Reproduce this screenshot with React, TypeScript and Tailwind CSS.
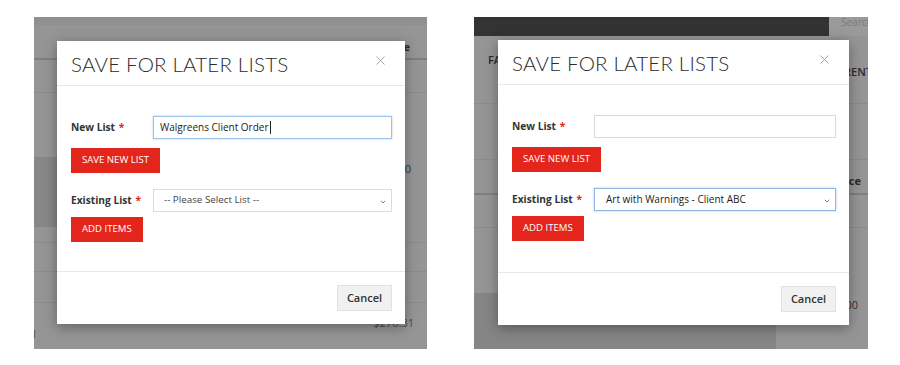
import React from "react";

const sans = "font-['Open_Sans','Liberation_Sans',sans-serif]";

function Chevron() {
  return (
    <svg width="6" height="4" viewBox="0 0 6 4" className="absolute right-[5px] top-[10px]">
      <path d="M0.8 0.8 L3 3 L5.2 0.8" fill="none" stroke="#777" strokeWidth="0.9" />
    </svg>
  );
}

function Modal({
  inputValue,
  inputFocus,
  selectValue,
  selectFocus,
  className,
}: {
  inputValue: string;
  inputFocus: boolean;
  selectValue: string;
  selectFocus: boolean;
  className: string;
}) {
  return (
    <div className={`absolute bg-white shadow-[0_3px_12px_rgba(0,0,0,0.35)] flex flex-col ${className}`}>
      <div className="h-[45px] border-b border-[#e8e8e8] flex items-start justify-between pl-[14px] pr-[20px] shrink-0">
        <div className="font-['Lato',sans-serif] font-light text-[20.5px] leading-none text-[#2b2b2b] mt-[13px] tracking-[0.2px]">
          SAVE FOR LATER LISTS
        </div>
        <svg width="9" height="9" viewBox="0 0 9 9" className="mt-[15px]">
          <path d="M0.5 0.5 L8.5 8.5 M8.5 0.5 L0.5 8.5" stroke="#9a9a9a" strokeWidth="0.9" />
        </svg>
      </div>
      <div className={`flex-1 pl-[14px] pr-[13px] pt-[30px] ${sans}`}>
        <div className="flex items-center">
          <div className="w-[82px] text-[10.2px] font-bold text-[#333]">
            New List <span className="text-[#e3251b] ml-[1px]">*</span>
          </div>
          <div
            className={`flex-1 h-[23px] border ${inputFocus ? "border-[#9cc3ea] shadow-[0_0_2px_rgba(102,155,220,0.5)]" : "border-[#d9d9d9]"} flex items-center pl-[6px] text-[10px] text-[#222]`}
          >
            {inputValue}
            {inputFocus && <span className="inline-block w-px h-[13px] bg-[#222] ml-px" />}
          </div>
        </div>
        <div className="mt-[9px] inline-flex h-[25px] items-center px-[11px] bg-[#e3251b] text-white text-[9.6px] uppercase">
          Save New List
        </div>
        <div className="flex items-center mt-[16px]">
          <div className="w-[82px] text-[10.2px] font-bold text-[#333]">
            Existing List <span className="text-[#e3251b] ml-[1px]">*</span>
          </div>
          <div
            className={`relative flex-1 h-[23px] border ${selectFocus ? "border-[#8fb7e0] shadow-[0_0_2px_rgba(102,155,220,0.6)]" : "border-[#dcdcdc]"} flex items-center ${selectFocus ? "pl-[11px] text-[10px] text-[#222]" : "pl-[10px] text-[9.8px] text-[#444]"}`}
          >
            {selectValue}
            <Chevron />
          </div>
        </div>
        <div className="mt-[5px] inline-flex h-[25px] items-center px-[11px] bg-[#e3251b] text-white text-[9.6px] uppercase">
          Add Items
        </div>
      </div>
      <div className={`h-[53px] border-t border-[#e8e8e8] flex items-start justify-end pr-[13px] pt-[13px] shrink-0 ${sans}`}>
        <div className="h-[26px] w-[55px] flex items-center justify-center bg-[#f1f1f1] border border-[#e2e2e2] text-[11px] font-semibold text-[#333]">
          Cancel
        </div>
      </div>
    </div>
  );
}

function LeftPanel() {
  return (
    <div className={`relative w-[393px] h-[332px] bg-[#959595] overflow-hidden flex flex-col ${sans}`}>
      <div className="h-[8px] bg-[#909090] shrink-0" />
      <div className="h-[35px] border-b-2 border-[#7f7f7f] flex items-start justify-end pr-[17px] pt-[14px] text-[11px] font-bold text-[#2a2a2a] shrink-0">
        Price
      </div>
      <div className="h-[33px] border-b border-[#8b8b8b] shrink-0" />
      <div className="h-[64px] shrink-0" />
      <div className="h-[70px] flex shrink-0">
        <div className="w-[340px] bg-[#878787]" />
        <div className="flex-1 flex justify-end pr-[16px] pt-[4px] text-[11px] text-[#333]">$0.00</div>
      </div>
      <div className="h-[16px] border-b border-[#8b8b8b] shrink-0" />
      <div className="h-[29px] border-b border-[#8b8b8b] shrink-0" />
      <div className="h-[31px] border-b border-[#8b8b8b] shrink-0" />
      <div className="flex-1 flex justify-between pr-[13px] text-[11px] text-[#4a4a4a]">
        <span className="-ml-[3px] mt-[23px]">1</span>
        <span className="mt-[12px]">$270.31</span>
      </div>
      <Modal
        className="left-[23px] top-[24px] w-[348px] h-[283px]"
        inputValue="Walgreens Client Order"
        inputFocus={true}
        selectValue="-- Please Select List --"
        selectFocus={false}
      />
    </div>
  );
}

function RightPanel() {
  return (
    <div className={`relative w-[394px] h-[332px] bg-[#959595] overflow-hidden flex flex-col ${sans}`}>
      <div className="h-[19px] bg-[#333333] flex justify-end shrink-0">
        <div className="w-[39px] bg-[#9a9a9a] text-[10px] text-[#7a7a7a] pl-[12px] leading-none overflow-hidden whitespace-nowrap">
          Search
        </div>
      </div>
      <div className="h-[68px] border-b border-[#8b8b8b] flex justify-between text-[11px] font-semibold text-[#2a2a2a] shrink-0">
        <span className="ml-[14px] mt-[16px]">FAV</span>
        <span className="mt-[28px] -mr-[4px]">CURRENT</span>
      </div>
      <div className="h-[56px] border-b border-[#8b8b8b] shrink-0" />
      <div className="h-[35px] border-b-2 border-[#7f7f7f] flex justify-end items-start pt-[13px] pr-[7px] text-[11px] font-bold text-[#2a2a2a] shrink-0">
        Price
      </div>
      <div className="h-[33px] border-b border-[#8b8b8b] shrink-0" />
      <div className="h-[65px] shrink-0" />
      <div className="flex-1 flex">
        <div className="w-[302px] bg-[#858585]" />
        <div className="flex-1 flex justify-end pr-[10px] pt-[4px] text-[11px] text-[#333]">$0.00</div>
      </div>
      <Modal
        className="left-[24px] top-[23px] w-[351px] h-[285px]"
        inputValue=""
        inputFocus={false}
        selectValue="Art with Warnings - Client ABC"
        selectFocus={true}
      />
    </div>
  );
}

export default function App() {
  return (
    <div className="w-[900px] h-[365px] bg-white pt-[17px] pl-[34px] flex gap-[47px]">
      <LeftPanel />
      <RightPanel />
    </div>
  );
}
